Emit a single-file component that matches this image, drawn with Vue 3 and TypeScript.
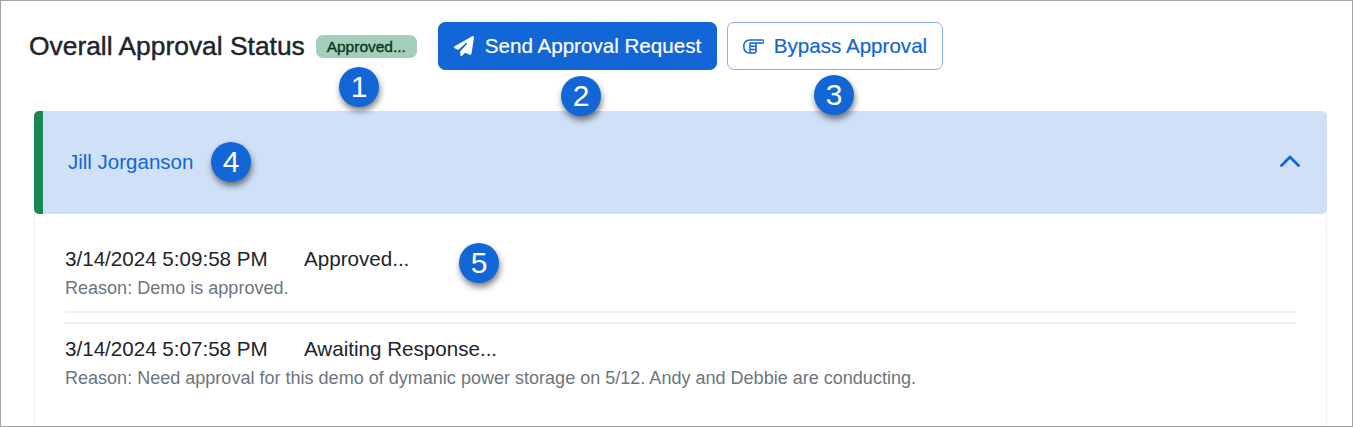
<script setup lang="ts">
const entries = [
  { id: 1, when: "3/14/2024 5:09:58 PM", status: "Approved...", reason: "Reason: Demo is approved." },
  {
    id: 2,
    when: "3/14/2024 5:07:58 PM",
    status: "Awaiting Response...",
    reason: "Reason: Need approval for this demo of dymanic power storage on 5/12. Andy and Debbie are conducting.",
  },
];

// numbered callouts sit on top of the screenshot, so these are free coordinates
const callouts = [
  { n: 1, x: 359, y: 87 },
  { n: 2, x: 581, y: 96 },
  { n: 3, x: 834, y: 95 },
  { n: 4, x: 231, y: 162 },
  { n: 5, x: 479, y: 263 },
];
</script>

<template>
  <div class="frame">
    <div class="status-bar">
      <h1 class="title">Overall Approval Status</h1>
      <span class="pill">Approved...</span>
      <button class="btn btn-primary">
        <svg class="plane" viewBox="0 0 512 512" aria-hidden="true">
          <path
            fill="currentColor"
            d="M498.1 5.6c10.1 7 15.4 19.1 13.5 31.2l-64 416c-1.5 9.7-7.4 18.2-16 23s-18.9 5.4-28 1.6L284 427.7l-68.5 74.1c-8.9 9.7-22.9 12.9-35.2 8.1S160 493.2 160 480V396.4c0-4 1.5-7.8 4.2-10.7L331.8 202.8c5.8-6.3 5.6-16-.4-22s-15.7-6.4-22-.7L106 360.8 17.7 316.6C7.1 311.3 .3 300.7 0 288.9s5.9-22.8 16.1-28.7l448-256c10.7-6.1 23.900-5.500 34 1.400z"
          />
        </svg>
        <span class="btn-label">Send Approval Request</span>
      </button>
      <button class="btn btn-outline">
        <svg class="hand" viewBox="0 0 21 15" aria-hidden="true">
          <path
            fill="none"
            stroke="currentColor"
            stroke-width="1.5"
            stroke-linecap="round"
            stroke-linejoin="round"
            d="M7 1h12.500a1.500 1.500 0 0 1 0 3H13M7 1C3 1 .8 3.500.8 7.500S3 14 7 14h4.500a1.500 1.500 0 0 0 1.500-1.500V4H7v10M7 7.300h6M7 10.600h6"
          />
        </svg>
        <span class="btn-label">Bypass Approval</span>
      </button>
    </div>

    <section class="panel">
      <header class="panel-head">
        <span class="person">Jill Jorganson</span>
        <svg class="chevron" viewBox="0 0 20 12" aria-hidden="true">
          <path fill="none" stroke="currentColor" stroke-width="2.800" stroke-linecap="round" stroke-linejoin="round" d="M1.500 10.500 10 2l8.500 8.500" />
        </svg>
      </header>
      <div class="panel-body">
        <div v-for="entry in entries" :key="entry.id" class="entry">
          <div class="entry-line">
            <span class="when">{{ entry.when }}</span>
            <span>{{ entry.status }}</span>
          </div>
          <div class="reason">{{ entry.reason }}</div>
        </div>
      </div>
    </section>

    <span
      v-for="c in callouts"
      :key="c.n"
      class="callout"
      :style="{ left: `${c.x - 21}px`, top: `${c.y - 21}px` }"
      >{{ c.n }}</span
    >
  </div>
</template>

<style scoped>
.frame {
  position: relative;
  box-sizing: border-box;
  width: 1353px;
  height: 427px;
  border: 1px solid #a3a3a3;
  overflow: hidden;
  display: flex;
  flex-direction: column;
  background: #fff;
  color: #212529;
  font-family: "Liberation Sans", Arial, sans-serif;
}

.status-bar {
  display: flex;
  align-items: center;
  height: 48px;
  margin-top: 21px;
  padding-left: 28px;
}

.title {
  margin: 0 11px 0 0;
  font-size: 26.4px;
  font-weight: 400;
  -webkit-text-stroke: 0.45px #212529;
}

.pill {
  box-sizing: border-box;
  width: 101px;
  height: 23px;
  margin-right: 21px;
  border-radius: 7px;
  background: #a3cfbb;
  color: #0a3622;
  font-size: 15.5px;
  line-height: 23px;
  text-align: center;
  -webkit-text-stroke: 0.35px #0a3622;
}

.btn {
  display: flex;
  align-items: center;
  box-sizing: border-box;
  height: 48px;
  border-radius: 7px;
  font-family: inherit;
  font-size: 20.6px;
  padding: 0;
}

.btn-label {
  -webkit-text-stroke: 0.2px currentColor;
}

.btn-primary {
  width: 279px;
  padding-left: 15px;
  gap: 11px;
  margin-right: 10px;
  border: 1px solid #1266d6;
  background: #1266d6;
  color: #fff;
}

.btn-outline {
  width: 216px;
  padding-left: 15px;
  gap: 10px;
  border: 1px solid #86b0ec;
  background: #fff;
  color: #1266d6;
}

.plane {
  width: 20px;
  height: 20px;
}

.hand {
  width: 21px;
  height: 15px;
}

.panel {
  flex: 1;
  display: flex;
  flex-direction: column;
  margin: 41px 25px 0 33px;
}

.panel-head {
  display: flex;
  align-items: center;
  justify-content: space-between;
  box-sizing: border-box;
  height: 103px;
  padding: 0 27px 0 25px;
  border-left: 9px solid #198754;
  border-radius: 5px;
  background: #cfe0f7;
  color: #1266d6;
}

.person {
  font-size: 20.5px;
  margin-top: -2px;
}

.chevron {
  width: 20px;
  height: 12px;
  margin-top: -4px;
}

.panel-body {
  flex: 1;
  padding: 0 30px;
  border-left: 1px solid #eee;
  border-right: 1px solid #eee;
}

.entry {
  padding-top: 32px;
  padding-bottom: 12px;
  border-bottom: 2px solid #eee;
}

.entry + .entry {
  margin-top: 9px;
  padding-top: 12px;
  border-top: 2px solid #eee;
  border-bottom: 0;
}

.entry-line {
  display: flex;
  font-size: 20.6px;
  line-height: 26px;
}

.when {
  width: 239px;
}

.reason {
  margin-top: 5px;
  color: #6c757d;
  font-size: 18.05px;
  line-height: 22px;
}

.callout {
  position: absolute;
  width: 40px;
  height: 40px;
  border-radius: 50%;
  background: #1266d6;
  box-shadow: 1px 4px 6px rgba(0, 0, 0, 0.5);
  color: #fff;
  font-size: 30px;
  line-height: 40px;
  text-align: center;
}
</style>
